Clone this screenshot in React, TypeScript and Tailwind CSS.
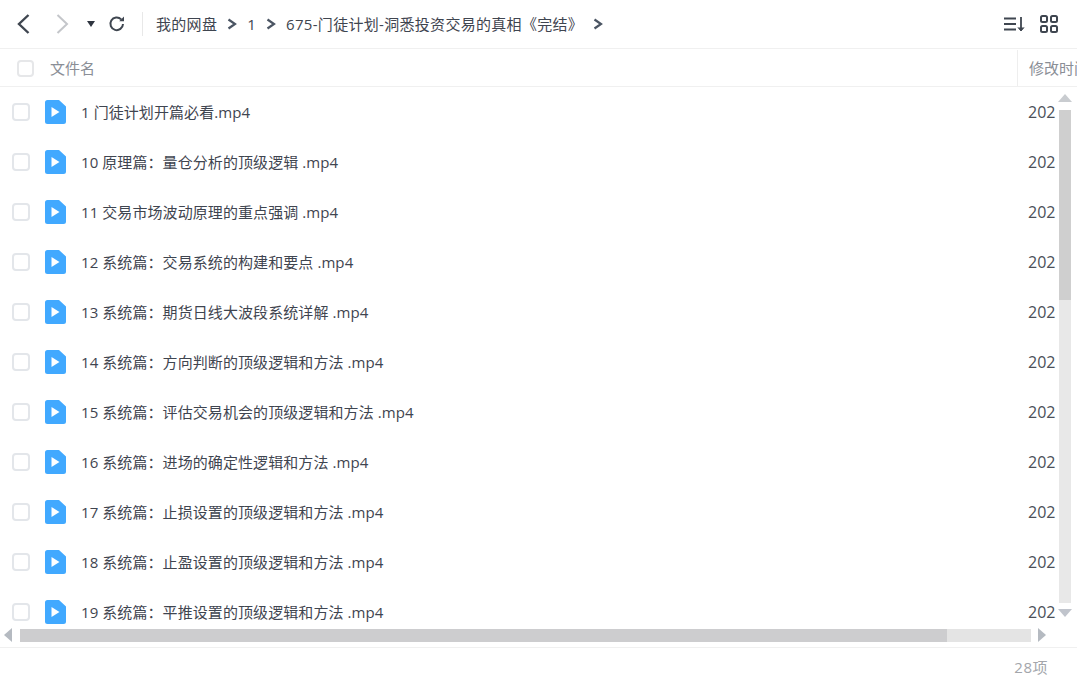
const files = [
  "1 门徒计划开篇必看.mp4",
  "10 原理篇：量仓分析的顶级逻辑 .mp4",
  "11 交易市场波动原理的重点强调 .mp4",
  "12 系统篇：交易系统的构建和要点 .mp4",
  "13 系统篇：期货日线大波段系统详解 .mp4",
  "14 系统篇：方向判断的顶级逻辑和方法 .mp4",
  "15 系统篇：评估交易机会的顶级逻辑和方法 .mp4",
  "16 系统篇：进场的确定性逻辑和方法 .mp4",
  "17 系统篇：止损设置的顶级逻辑和方法 .mp4",
  "18 系统篇：止盈设置的顶级逻辑和方法 .mp4",
  "19 系统篇：平推设置的顶级逻辑和方法 .mp4",
];

function Crumb({ label }: { label: string }) {
  return (
    <>
      <span className="whitespace-nowrap tracking-[0.3px]">{label}</span>
      <svg width="10" height="12" viewBox="0 0 10 12" className="mx-[10px] shrink-0" fill="none" stroke="#4b5563" strokeWidth="2.2">
        <path d="M1.5 1.5 8 6 1.5 10.5" />
      </svg>
    </>
  );
}

function FileIcon() {
  return (
    <svg width="21" height="24" viewBox="0 0 21 24" className="shrink-0">
      <path d="M2.5 0H14l7 6.5V21.5a2.5 2.5 0 0 1-2.5 2.5h-16A2.5 2.5 0 0 1 0 21.5v-19A2.5 2.5 0 0 1 2.5 0Z" fill="#41a9ff" />
      <path d="M6.5 7v10l8-5Z" fill="#fff" />
    </svg>
  );
}

export default function App() {
  return (
    <div className="flex h-[685px] w-[1077px] flex-col overflow-hidden bg-white font-['Open_Sans','Noto_Sans_CJK_SC',sans-serif] text-[15px] text-[#3f4550]">
      <div className="flex h-[49px] shrink-0 items-center border-b border-[#f0f0f0] pl-[17px] pr-[19px]">
        <svg width="13" height="20" viewBox="0 0 13 20" fill="none" stroke="#3f4650" strokeWidth="2.4">
          <path d="M11.5 1 2 10l9.5 9" />
        </svg>
        <svg width="13" height="20" viewBox="0 0 13 20" className="ml-[26px]" fill="none" stroke="#c4c6ca" strokeWidth="2">
          <path d="M1.5 1 11 10l-9.5 9" />
        </svg>
        <svg width="8" height="6" viewBox="0 0 8 6" className="ml-[18px]">
          <path d="M0 0h8L4 6Z" fill="#2f3540" />
        </svg>
        <svg width="18" height="18" viewBox="0 0 18 18" className="ml-[13px]" fill="none" stroke="#3f4650" strokeWidth="2">
          <path d="M15 9a6.3 6.3 0 1 1-1.8-4.6" />
          <path d="M16 1.5v4.8h-4.8Z" fill="#3f4650" stroke="none" />
        </svg>
        <div className="ml-[16px] mr-[13px] h-[24px] w-px bg-[#e8e8e8]" />
        <div className="flex items-center">
          <Crumb label="我的网盘" />
          <Crumb label="1" />
          <Crumb label="675-门徒计划-洞悉投资交易的真相《完结》" />
        </div>
        <div className="ml-auto flex items-center gap-[15px]">
          <svg width="21" height="16" viewBox="0 0 21 16" fill="none" stroke="#3f4650" strokeWidth="1.8">
            <path d="M0 2.5h12M0 8h12M0 13.5h12M17 1v12" />
            <path d="M14 11.5l3 3.5 3-3.5" fill="#3f4650" strokeWidth="1" />
          </svg>
          <svg width="18" height="18" viewBox="0 0 18 18" fill="none" stroke="#3f4650" strokeWidth="2">
            <rect x="1" y="1" width="6" height="6" rx="1.5" />
            <rect x="11" y="1" width="6" height="6" rx="1.5" />
            <rect x="1" y="11" width="6" height="6" rx="1.5" />
            <rect x="11" y="11" width="6" height="6" rx="1.5" />
          </svg>
        </div>
      </div>

      <div className="flex h-[38px] shrink-0 items-center border-b border-[#f0f0f0] pt-[1px] text-[#8a8e96]">
        <div className="ml-[17px] h-[17px] w-[17px] rounded-[4px] border-2 border-[#e6e7e9]" />
        <span className="ml-[16px]">文件名</span>
        <div className="ml-auto flex h-full w-[60px] items-center overflow-hidden whitespace-nowrap border-l border-[#eeeeee] pl-[11px]">
          修改时间
        </div>
      </div>

      <div className="relative h-[541px] shrink-0 overflow-hidden">
        {files.map((name) => (
          <div key={name} className="flex h-[50px] items-center">
            <div className="ml-[12px] h-[18px] w-[18px] shrink-0 rounded-[4px] border-2 border-[#e3e6ea]" />
            <div className="ml-[15px]">
              <FileIcon />
            </div>
            <span className="ml-[15px] whitespace-nowrap tracking-[0.08px]">{name}</span>
            <span className="ml-auto w-[49px] shrink-0 text-[16px] text-[#4b5058]">202</span>
          </div>
        ))}
        <div className="absolute right-[5px] top-[7px] flex h-[523px] w-[14px] flex-col items-center">
          <div className="h-0 w-0 border-x-[7px] border-b-[8px] border-x-transparent border-b-[#c9ccd0]" />
          <div className="mt-[8px] w-[12px] flex-1 bg-[#e8e8e8]">
            <div className="h-[190px] bg-[#cfcfcf]" />
          </div>
          <div className="mt-[6px] h-0 w-0 border-x-[7px] border-t-[8px] border-x-transparent border-t-[#c0c4cc]" />
        </div>
      </div>

      <div className="flex h-[20px] shrink-0 items-center border-b border-[#f0f0f0] pb-[5px] pl-[4px] pr-[31px]">
        <div className="h-0 w-0 border-y-[7px] border-r-[8px] border-y-transparent border-r-[#b5bac1]" />
        <div className="ml-[8px] h-[13px] flex-1 bg-[#e4e4e4]">
          <div className="h-full w-[927px] bg-[#cdcdcf]" />
        </div>
        <div className="ml-[7px] h-0 w-0 border-y-[7px] border-l-[8px] border-y-transparent border-l-[#b5bac1]" />
      </div>

      <div className="flex flex-1 items-start justify-end pr-[29px] pt-[8px] tracking-[0.5px] text-[#a3a6ab]">28项</div>
    </div>
  );
}
